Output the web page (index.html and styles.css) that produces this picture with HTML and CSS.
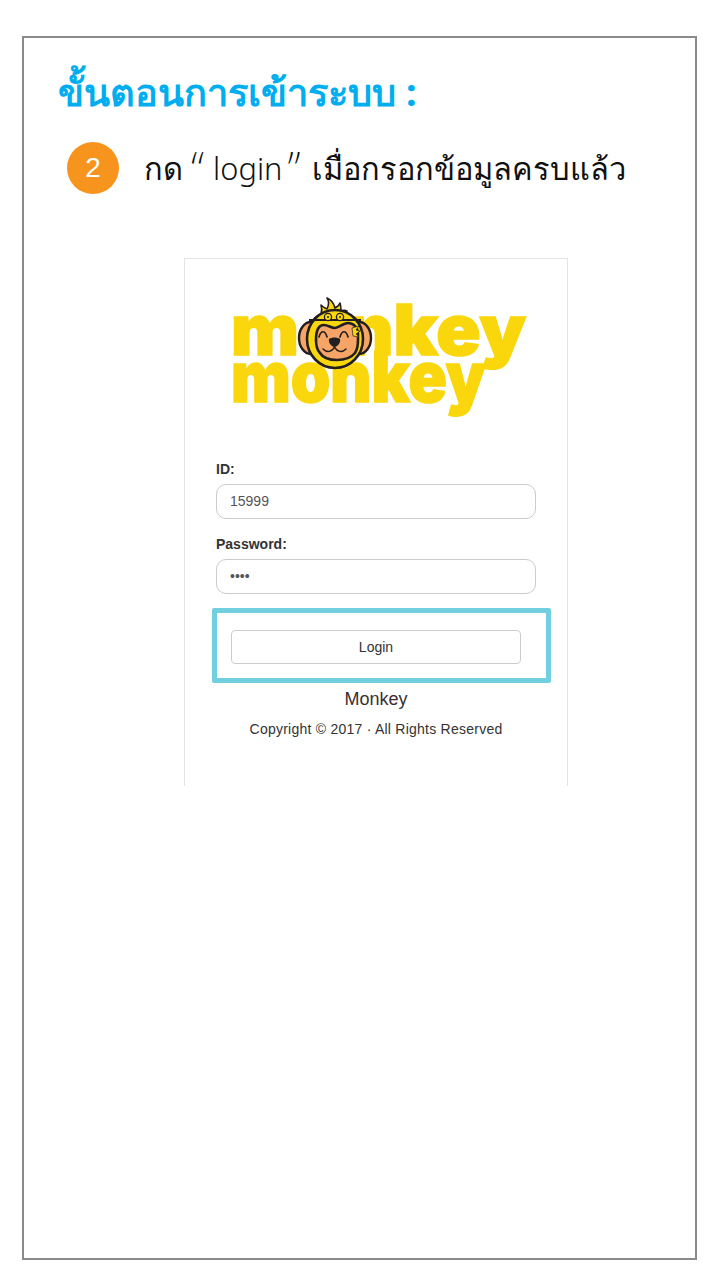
FILE: index.html
```html
<!DOCTYPE html>
<html lang="th">
<head>
    <meta charset="UTF-8">
    <meta name="viewport" content="width=device-width, initial-scale=1.0">
    <title>Monkey Monkey</title>
    <link rel="stylesheet" href="styles.css">
</head>
<body>
    <div class="frame">
        <h1 class="title">ขั้นตอนการเข้าระบบ :</h1>
        <div class="step">
            <span class="step_num">2</span>
            <p class="step_text">กด <span class="quote_open">“</span>login<span class="quote_close">”</span> เมื่อกรอกข้อมูลครบแล้ว</p>
        </div>

        <div class="card">
            <svg class="logo" width="300" height="122" viewBox="0 0 300 122">
                <text class="logo_word" x="-2" y="57" textLength="68" lengthAdjust="spacingAndGlyphs">m</text>
                <text class="logo_word" x="113" y="57" textLength="180" lengthAdjust="spacingAndGlyphs">nkey</text>
                <text class="logo_word" x="-2" y="104" textLength="255" lengthAdjust="spacingAndGlyphs">monkey</text>
                <ellipse cx="78" cy="40" rx="12" ry="16" fill="#f6a566" stroke="#231f20" stroke-width="2.400"/>
                <ellipse cx="126" cy="40" rx="12" ry="16" fill="#f6a566" stroke="#231f20" stroke-width="2.400"/>
                <path d="M80 22 C82 19 86 17 88 16 C89 13 89 10 88 7 C90 9 92 10 94 11 C96 7 96 3 94 0 C99 2 101 6 102 10 C104 9 106 8 107 5 C108 8 108 10 108 13 C110 12 112 12 114 13 C113 15 113 16 114 17 C118 18 122 20 124 22 Z" fill="#fad70c" stroke="#231f20" stroke-width="1.600" stroke-linejoin="round"/>
                <ellipse cx="102" cy="41" rx="28" ry="29" fill="#fad70c" stroke="#231f20" stroke-width="2.600"/>
                <path d="M76 22 H128" stroke="#231f20" stroke-width="2" fill="none"/>
                <circle cx="95" cy="19" r="3.600" fill="#fad70c" stroke="#231f20" stroke-width="1.300"/>
                <circle cx="107" cy="19" r="3.600" fill="#fad70c" stroke="#231f20" stroke-width="1.300"/>
                <circle cx="95" cy="19" r="1" fill="#231f20"/>
                <circle cx="107" cy="19" r="1" fill="#231f20"/>
                <path d="M83 42 C83 33 85 27 91 27 C95 27 98 30 102 30 C106 30 110 25 115 25 C121 25 125 30 125 36 L125 42 C125 48 124 52 122 55 C118 60 111 62 104 62 C97 62 90 60 87 55 C84 52 83 48 83 42 Z" fill="#f6a566" stroke="#231f20" stroke-width="2.600"/>
                <path d="M119 30 L126 28 L123 32 L127 33 L123 36 L126 39 L120 38 Z" fill="#fad70c" stroke="#231f20" stroke-width="0.700" stroke-linejoin="round"/>
                <path d="M86 39 C88 32 92 32 94 39 M107 39 C109 32 113 32 115 39" fill="none" stroke="#231f20" stroke-width="1.700" stroke-linecap="round"/>
                <path d="M96 41 C99 39 104 39 107 41 C108 45 104 49 101.500 49 C99 49 95 45 96 41 Z" fill="#231f20"/>
                <path d="M90 51 C94 55 99 54 101.500 49 C104 54 109 55 113 51" fill="none" stroke="#231f20" stroke-width="1.500" stroke-linecap="round"/>
            </svg>

            <form class="login_form">
                <label class="field_label" for="user_id">ID:</label>
                <input class="field" id="user_id" type="text" value="15999">
                <label class="field_label" for="user_pass">Password:</label>
                <input class="field" id="user_pass" type="password" value="1234">
                <div class="highlight">
                    <button class="login_btn" type="button">Login</button>
                </div>
            </form>
            <div class="brand">Monkey</div>
            <div class="copyright">Copyright © 2017 · All Rights Reserved</div>
        </div>
    </div>
</body>
</html>
```

FILE: styles.css
```css
* {
    box-sizing: border-box;
}

html, body {
    margin: 0;
    padding: 0;
    background-color: #fff;
}

.frame {
    width: 675px;
    height: 1224px;
    margin: 36px 0 0 22px;
    border: 2px solid #8a8a8a;
}

.title {
    margin: 0;
    padding: 27px 0 0 34px;
    height: 76px;
    color: #00aeef;
    font-family: "Noto Sans", "DejaVu Sans", sans-serif;
    font-size: 38px;
    font-weight: bold;
    line-height: 52px;
    white-space: nowrap;
}

.step {
    display: flex;
    align-items: center;
    height: 60px;
    padding: 0 0 0 43px;
    margin-top: 24px;
}

.step_num {
    width: 52px;
    height: 52px;
    border-radius: 50%;
    background-color: #f7941d;
    color: #fff;
    font-family: "Liberation Sans", sans-serif;
    font-size: 28px;
    line-height: 52px;
    text-align: center;
    flex-shrink: 0;
}

.step_text {
    margin: 0 0 0 25px;
    color: #111;
    font-family: "Noto Sans", "DejaVu Sans", sans-serif;
    font-size: 30.800px;
    font-weight: 300;
    line-height: 44px;
    white-space: nowrap;
}

.quote_open,
.quote_close {
    font-size: 46px;
    font-weight: 200;
    line-height: 20px;
    vertical-align: -5px;
}

.quote_open {
    margin-right: 9px;
}

.quote_close {
    margin: 0 3px 0 5px;
}

.card {
    width: 384px;
    height: 528px;
    margin: 60px 0 0 160px;
    border: 1px solid #e4e4e4;
    border-bottom: 0;
    padding-top: 39px;
    font-family: "Liberation Sans", sans-serif;
}

.logo {
    display: block;
    margin-left: 48px;
    overflow: visible;
}

.logo_word {
    fill: #fad70c;
    stroke: #fad70c;
    stroke-width: 1.600px;
    font-family: "Inter", "Liberation Sans", sans-serif;
    font-size: 70px;
    font-weight: 900;
}

.login_form {
    margin-top: 39px;
    padding: 0 31px;
}

.field_label {
    display: block;
    margin-bottom: 5px;
    color: #333;
    font-size: 14px;
    font-weight: bold;
    line-height: 20px;
    height: 20px;
}

.field {
    display: block;
    width: 320px;
    height: 35px;
    margin-bottom: 15px;
    padding: 4px 13px 6px;
    border: 1px solid #ccc;
    border-radius: 10px;
    background-color: #fff;
    color: #555;
    font-family: "Liberation Sans", sans-serif;
    font-size: 14px;
}

.highlight {
    width: 339px;
    height: 75px;
    margin: -1px 0 0 -4px;
    padding: 17px 14px;
    border: 5px solid #72cfe0;
    border-radius: 2px;
}

.login_btn {
    display: block;
    width: 290px;
    height: 34px;
    border: 1px solid #ccc;
    border-radius: 4px;
    background-color: #fff;
    color: #333;
    font-family: "Liberation Sans", sans-serif;
    font-size: 14px;
}

.brand {
    margin-top: 5px;
    color: #3a2f2f;
    font-size: 18px;
    line-height: 22px;
    text-align: center;
}

.copyright {
    margin-top: 9px;
    color: #333;
    font-size: 14px;
    letter-spacing: 0.240px;
    line-height: 20px;
    text-align: center;
}
```
